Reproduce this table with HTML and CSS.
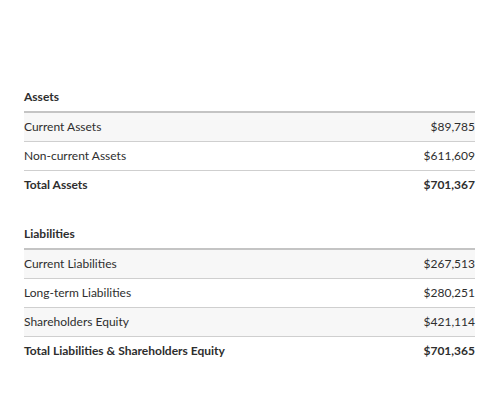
FILE: index.html
```html
<!DOCTYPE html>
<html>
<head>
<meta charset="utf-8">
<link rel="stylesheet" href="styles.css">
</head>
<body>
<div class="sheet">
  <table class="fin">
    <thead><tr><th colspan="2">Assets</th></tr></thead>
    <tbody>
      <tr class="alt"><td>Current Assets</td><td class="num">$89,785</td></tr>
      <tr><td>Non-current Assets</td><td class="num">$611,609</td></tr>
      <tr class="total"><td>Total Assets</td><td class="num">$701,367</td></tr>
    </tbody>
  </table>
  <table class="fin">
    <thead><tr><th colspan="2">Liabilities</th></tr></thead>
    <tbody>
      <tr class="alt"><td>Current Liabilities</td><td class="num">$267,513</td></tr>
      <tr><td>Long-term Liabilities</td><td class="num">$280,251</td></tr>
      <tr class="alt"><td>Shareholders Equity</td><td class="num">$421,114</td></tr>
      <tr class="total"><td>Total Liabilities &amp; Shareholders Equity</td><td class="num">$701,365</td></tr>
    </tbody>
  </table>
</div>
</body>
</html>
```
FILE: styles.css
```css
html, body {
  margin: 0;
  background: #fff;
}
body {
  font-family: Lato, "Open Sans", "Liberation Sans", sans-serif;
  font-size: 12px;
  color: #2e2e2e;
}
.sheet {
  padding: 85px 25px 0 24px;
  display: flex;
  flex-direction: column;
  gap: 23px;
}
.fin {
  width: 100%;
  border-collapse: collapse;
}
.fin th {
  text-align: left;
  font-weight: 700;
  padding: 4px 0 7px;
  line-height: 15px;
  height: 15px;
  border-bottom: 2px solid #c4c4c4;
}
.fin td {
  padding: 7px 0;
  line-height: 14px;
  border-bottom: 1px solid #cfcfcf;
}
.fin tr.alt td {
  background: #f7f7f7;
}
.fin tr.total td {
  font-weight: 700;
  border-bottom: none;
}
.fin td.num {
  text-align: right;
}
```
